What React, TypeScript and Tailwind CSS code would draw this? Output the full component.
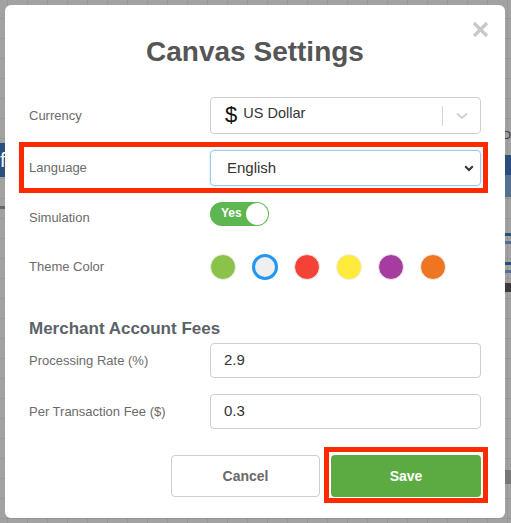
import React from "react";

const colors = [
  { c: "bg-[#8bc34a]", sel: false },
  { c: "bg-[#efefef]", sel: true },
  { c: "bg-[#f44336]", sel: false },
  { c: "bg-[#ffeb3b]", sel: false },
  { c: "bg-[#a63c9f]", sel: false },
  { c: "bg-[#ee7623]", sel: false },
];

export default function App() {
  return (
    <div
      className="relative w-full h-[523px] overflow-hidden bg-[#a2a2a2] bg-[linear-gradient(to_right,rgba(0,0,0,0.07)_1px,transparent_1px),linear-gradient(to_bottom,rgba(0,0,0,0.07)_1px,transparent_1px)] bg-size-[20px_20px] bg-position-[7px_18px] p-[5px]"
      style={{ fontFamily: '"Liberation Sans", Arial, Helvetica, sans-serif' }}
    >
      {/* canvas items peeking behind the modal */}
      <div className="absolute left-0 top-[143px] w-[8px] h-[34px] bg-[#2d4f7c] text-white text-[20px] leading-[34px]">f</div>
      <div className="absolute left-0 top-[206px] w-[8px] h-[3px] bg-[#666]" />
      <div className="absolute right-0 top-[129px] w-[8px] h-[12px] overflow-hidden">
        <span className="block w-[20px] text-[11px] text-[#333] leading-[12px]">Do</span>
      </div>
      <div className="absolute right-0 top-[155px] w-[8px] h-[20px] bg-[#2a4e7a]" />
      <div className="absolute right-0 top-[175px] w-[8px] h-[22px] bg-[#56708f]" />
      <div className="absolute right-0 top-[233px] w-[8px] h-[3px] bg-[#2a4e7a]" />
      <div className="absolute right-0 top-[241px] w-[8px] h-[3px] bg-[#4f6f95]" />
      <div className="absolute right-0 top-[262px] w-[8px] h-[3px] bg-[#2a4e7a]" />
      <div className="absolute right-0 top-[270px] w-[8px] h-[3px] bg-[#4f6f95]" />
      <div className="absolute right-0 top-[283px] w-[8px] h-[9px] bg-[#3a3a3a]" />
      <div className="absolute right-0 top-[470px] w-[8px] h-[14px] bg-[#777]" />

      <div className="relative w-[500px] h-[513px] bg-white rounded-[6px] px-[24px] pt-[31px]">
        {/* close */}
        <button className="absolute right-[16px] top-[16px] w-[17px] h-[17px]">
          <svg viewBox="0 0 17 17" width="17" height="17">
            <path d="M2 2 L15 15 M15 2 L2 15" stroke="#c8c8c8" strokeWidth="3.2" strokeLinecap="butt" />
          </svg>
        </button>

        <h1 className="text-center text-[28px] leading-[32px] font-bold text-[#555]">Canvas Settings</h1>

        {/* Currency */}
        <div className="mt-[29px] flex items-center">
          <div className="w-[181px] text-[13px] text-[#6b6b6b]">Currency</div>
          <div className="w-[271px] h-[37px] border border-[#cfcfcf] rounded-[4px] flex items-center">
            <span className="ml-[14px] text-[22px] leading-none text-[#111] -mt-[1px]">$</span>
            <span className="ml-[6px] text-[14.5px] text-[#333] -mt-[3px]">US Dollar</span>
            <div className="ml-auto w-[1px] h-[20px] bg-[#d6d6d6]" />
            <div className="w-[37px] flex justify-center">
              <svg width="12" height="8" viewBox="0 0 12 8">
                <path d="M1 1.5 L6 6 L11 1.5" fill="none" stroke="#cfcfcf" strokeWidth="1.8" />
              </svg>
            </div>
          </div>
        </div>

        {/* Language */}
        <div className="relative mt-[16px] flex items-center">
          <div className="absolute left-[-10px] right-[-7px] top-[-8px] bottom-[-7px] border-[5px] border-[#fb2a00] pointer-events-none" />
          <div className="w-[181px] text-[13px] text-[#6b6b6b]">Language</div>
          <div className="w-[271px] h-[36px] border border-[#9ccbee] rounded-[4px] flex items-center shadow-[0_0_2px_rgba(102,175,233,0.5)]">
            <span className="ml-[16px] text-[15px] text-[#333]">English</span>
            <svg className="ml-auto mr-[6px]" width="10" height="7" viewBox="0 0 10 7">
              <path d="M1.2 1.3 L5 5 L8.8 1.3" fill="none" stroke="#333" strokeWidth="2" />
            </svg>
          </div>
        </div>

        {/* Simulation */}
        <div className="mt-[16px] flex items-center">
          <div className="w-[181px] text-[13px] text-[#6b6b6b] translate-y-[4px]">Simulation</div>
          <div className="w-[59px] h-[24px] rounded-full bg-[#5db64f] flex items-center relative">
            <span className="ml-[11px] text-[12px] font-bold text-white -mt-[2px]">Yes</span>
            <div className="absolute right-[1px] top-[1px] w-[22px] h-[22px] rounded-full bg-white" />
          </div>
        </div>

        {/* Theme color */}
        <div className="mt-[28px] flex items-center">
          <div className="w-[181px] text-[13px] text-[#6b6b6b]">Theme Color</div>
          <div className="flex gap-[16px]">
            {colors.map((k, i) => (
              <div
                key={i}
                className={
                  k.sel
                    ? `w-[26px] h-[26px] rounded-full ${k.c} border-[3px] border-[#2196f3]`
                    : `w-[26px] h-[26px] rounded-full ${k.c} border border-[#ececec]`
                }
              />
            ))}
          </div>
        </div>

        {/* Merchant */}
        <h2 className="mt-[39px] text-[17px] leading-[20px] font-bold text-[#5b6269]">Merchant Account Fees</h2>

        <div className="mt-[4px] flex items-center">
          <div className="w-[181px] text-[13px] text-[#6b6b6b]">Processing Rate (%)</div>
          <div className="w-[271px] h-[35px] border border-[#cfcfcf] rounded-[4px] flex items-center">
            <span className="ml-[13px] text-[15px] text-[#333]">2.9</span>
          </div>
        </div>

        <div className="mt-[16px] flex items-center">
          <div className="w-[181px] text-[13px] text-[#6b6b6b]">Per Transaction Fee ($)</div>
          <div className="w-[271px] h-[35px] border border-[#cfcfcf] rounded-[4px] flex items-center">
            <span className="ml-[13px] text-[15px] text-[#333]">0.3</span>
          </div>
        </div>

        {/* Buttons */}
        <div className="mt-[26px] flex justify-end gap-[11px]">
          <button className="w-[149px] h-[42px] border border-[#cfcfcf] rounded-[4px] bg-white text-[14px] font-bold text-[#6a6a6a]">
            Cancel
          </button>
          <div className="relative">
            <div className="absolute left-[-7px] right-[-7px] top-[-8px] bottom-[-6px] border-[5px] border-[#fb2a00] pointer-events-none" />
            <button className="w-[150px] h-[42px] rounded-[4px] bg-[#5cab42] text-[14px] font-bold text-white">
              Save
            </button>
          </div>
        </div>
      </div>
    </div>
  );
}
